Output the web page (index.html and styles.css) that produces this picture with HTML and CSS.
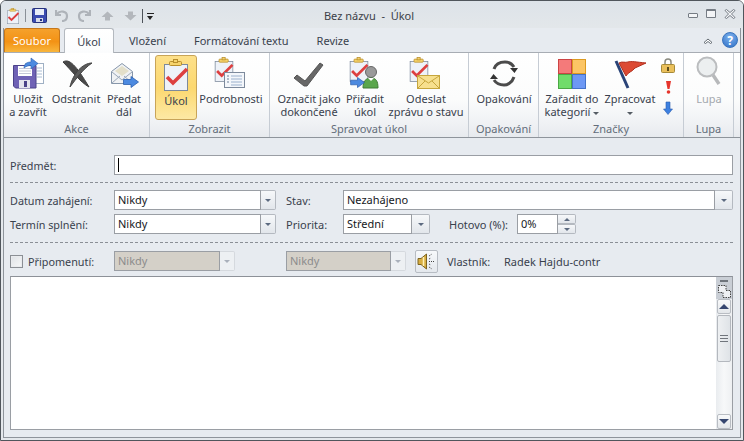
FILE: index.html
```html
<!DOCTYPE html>
<html lang="cs">
<head>
<meta charset="utf-8">
<title>Bez názvu - Úkol</title>
<link rel="stylesheet" href="styles.css">
</head>
<body>
<svg class="defs" width="0" height="0">
  <defs>
    <symbol id="clip" viewBox="0 0 26 32">
      <rect x="1.500" y="5.500" width="23" height="26" fill="#eef2f8" stroke="#7d8a9c"/>
      <rect x="6.500" y="2.500" width="12" height="4" rx="1" fill="#f6d36b" stroke="#b98f2c"/>
      <rect x="10.500" y="0.500" width="4" height="3" fill="#f6d36b" stroke="#b98f2c"/>
      <path d="M4 18l6 6L24 10" fill="none" stroke="#dd4040" stroke-width="3.600"/>
    </symbol>
    <symbol id="arrow" viewBox="0 0 16 12">
      <path d="M0.500 3.500H8V0.500L15.500 6 8 11.500V8.500H0.500z" fill="#4c8ae0" stroke="#2c5fae" stroke-width="0.800"/>
    </symbol>
  </defs>
</svg>
<div class="window">
  <header class="titlebar">
    <div class="qat">
      <svg class="qat-app" width="14" height="16" viewBox="0 0 26 32"><use href="#clip"/></svg>
      <span class="qat-sep"></span>
      <svg width="15" height="15" viewBox="0 0 15 15"><rect x="0.500" y="0.500" width="14" height="14" rx="1" fill="#3b4bb0" stroke="#27327d"/><rect x="3" y="1" width="9" height="6" fill="#e8edf8"/><rect x="4" y="10" width="7" height="4" fill="#d7dbe8"/><rect x="8" y="11" width="2" height="2" fill="#27327d"/></svg>
      <svg class="qat-gap" width="14" height="13" viewBox="0 0 14 13"><path d="M1 1v5h5M2 5c3-4 10-3 10 2 0 3-2 5-5 5" fill="none" stroke="#aeb3b9" stroke-width="2.200"/></svg>
      <svg class="qat-gap" width="14" height="13" viewBox="0 0 14 13"><path d="M13 1v5H8M12 5C9 1 2 2 2 7c0 3 2 5 5 5" fill="none" stroke="#aeb3b9" stroke-width="2.200"/></svg>
      <svg class="qat-gap2" width="13" height="10" viewBox="0 0 13 10"><path d="M6.500 0.500L12.500 6H9v3.500H4V6H0.500z" fill="#b3b7bc"/></svg>
      <svg class="qat-gap2" width="13" height="10" viewBox="0 0 13 10"><path d="M6.500 9.500L12.500 4H9V0.500H4V4H0.500z" fill="#b3b7bc"/></svg>
      <span class="qat-sep qat-sep-b"></span>
      <span class="qat-more"></span>
    </div>
    <div class="title">Bez názvu&nbsp; -&nbsp; Úkol</div>
    <div class="winctl">
      <span class="ctl-min"></span>
      <span class="ctl-max"></span>
      <svg width="12" height="10" viewBox="0 0 12 10"><path d="M1 1.500L2.500 0.500 6 3.500 9.500 0.500 11 1.500 7.500 5 11 8.500 9.500 9.500 6 6.500 2.500 9.500 1 8.500 4.500 5z" fill="#f3f5f7" stroke="#757c84"/></svg>
    </div>
  </header>

  <nav class="tabbar">
    <span class="tab-file">Soubor</span>
    <span class="tab tab-active">Úkol</span>
    <span class="tab">Vložení</span>
    <span class="tab">Formátování textu</span>
    <span class="tab">Revize</span>
    <div class="tab-right">
      <svg width="10" height="7" viewBox="0 0 10 7"><path d="M1 5.500L5 2l4 3.500-1.500 1L5 4.500 2.500 6.500z" fill="#fff" stroke="#555c64" stroke-width="0.900"/></svg>
      <span class="help">?</span>
    </div>
  </nav>

  <section class="ribbon">
    <div class="group g-akce">
      <div class="btns">
        <div class="btn w48">
          <svg width="34" height="34" viewBox="0 0 34 34"><rect x="14.500" y="8.500" width="18" height="20" fill="#fff" stroke="#9fb0c4"/><path d="M26 13h5M26 16h5M26 19h5M26 22h5" stroke="#a9bcd2"/><path d="M2.500 10.500H25V33H4.500L2.500 31z" fill="#6f62b5" stroke="#4b4289"/><rect x="7" y="11" width="14" height="10" fill="#fff"/><path d="M8 13.500h12M8 16h12M8 18.500h12" stroke="#c5c8d8"/><rect x="8" y="25" width="11" height="8" fill="#e4e4ee"/><rect x="13" y="26" width="3" height="6" fill="#4b4289"/><path d="M13 13c0-5 4-6 7-6V3l7 5.500-7 5.500v-3.500c-3 0-5 1-7 2.500z" fill="#4c8ae0" stroke="#2c5fae" stroke-width="0.600"/></svg>
          <span>Uložit<br>a zavřít</span>
        </div>
        <div class="btn w48">
          <svg width="34" height="34" viewBox="0 0 34 34"><path d="M4 7C10 3 17 10 30 32 21 27 12 15 4 7z" fill="#484848" stroke="#3a3a3a"/><path d="M33 8C24 8 14 18 11 32 17 24 24 14 33 8z" fill="#5c5c5c" stroke="#444"/></svg>
          <span>Odstranit</span>
        </div>
        <div class="btn w48">
          <svg width="34" height="34" viewBox="0 0 34 34"><path d="M4.500 16.500L15 8.500l10.500 8v12h-21z" fill="#f0f2f4" stroke="#8696aa"/><path d="M8 16l7-5 7 5-7 5z" fill="#e3dfc9"/><path d="M5 28l8-7M25 28l-8-7M5 17l10 8 10-8" fill="none" stroke="#9aa8ba"/><use href="#arrow" x="16" y="21" width="16" height="12"/></svg>
          <span>Předat<br>dál</span>
        </div>
      </div>
      <div class="group-label">Akce</div>
    </div>

    <div class="group g-zobr">
      <div class="btns">
        <div class="btn w42 selected">
          <svg width="26" height="32" viewBox="0 0 26 32"><use href="#clip"/></svg>
          <span>Úkol</span>
        </div>
        <div class="btn w68">
          <svg width="34" height="34" viewBox="0 0 34 34"><use href="#clip" x="0" y="2" width="20" height="25"/><rect x="10.500" y="17.500" width="20" height="15" fill="#f4f7fb" stroke="#7d8a9c"/><path d="M17 21h11M17 24h11M17 27h11M17 30h11" stroke="#9ab0cc"/><path d="M13 21h2M13 24h2M13 27h2" stroke="#6f8098"/></svg>
          <span>Podrobnosti</span>
        </div>
      </div>
      <div class="group-label">Zobrazit</div>
    </div>

    <div class="group g-sprav">
      <div class="btns">
        <div class="btn w66">
          <svg width="34" height="34" viewBox="0 0 34 34"><path d="M2 23l3-3 8 6L28 8l3 2-16 21h-3z" fill="#676767" stroke="#555"/></svg>
          <span>Označit jako<br>dokončené</span>
        </div>
        <div class="btn w46">
          <svg width="34" height="34" viewBox="0 0 34 34"><use href="#clip" x="1" y="2" width="20" height="25"/><circle cx="23" cy="17" r="5.500" fill="#9a9a9a" stroke="#666"/><path d="M15 33c0-7 3-10 8-10s7 3 7 10z" fill="#5aa64c" stroke="#3f7c35"/><path d="M20 23l3 3 3-3z" fill="#fff"/><use href="#arrow" x="2" y="22" width="15" height="11"/></svg>
          <span>Přiřadit<br>úkol</span>
        </div>
        <div class="btn w76">
          <svg width="34" height="34" viewBox="0 0 34 34"><use href="#clip" x="0" y="2" width="20" height="25"/><rect x="8.500" y="20.500" width="22" height="13" fill="#f7e08e" stroke="#c6a63d"/><path d="M9 21l10.500 7L30 21M9 33l7-7M30 33l-7-7" fill="none" stroke="#c6a63d"/></svg>
          <span>Odeslat<br>zprávu o stavu</span>
        </div>
      </div>
      <div class="group-label">Spravovat úkol</div>
    </div>

    <div class="group g-opak">
      <div class="btns">
        <div class="btn w70">
          <svg width="34" height="34" viewBox="0 0 34 34"><path d="M7 14C9 8 14 7 18 7c4 0 7 2 9 5M27 22c-2 6-7 8-10 8-4 0-8-2-10-5" fill="none" stroke="#4b4b4b" stroke-width="3"/><path d="M23 13h8l-3.500 5zM11 24H3l3.500-5z" fill="#333"/></svg>
          <span>Opakování</span>
        </div>
      </div>
      <div class="group-label">Opakování</div>
    </div>

    <div class="group g-znac">
      <div class="btns">
        <div class="btn w56">
          <svg width="30" height="34" viewBox="0 0 30 34"><rect x="1.500" y="4.500" width="13" height="14" fill="#f47a7a" stroke="#c44"/><rect x="15.500" y="4.500" width="13" height="14" fill="#fcc565" stroke="#dc9a20"/><rect x="1.500" y="19.500" width="13" height="14" fill="#70dc6a" stroke="#4ba845"/><rect x="15.500" y="19.500" width="13" height="14" fill="#6d98f4" stroke="#4472c8"/></svg>
          <span>Zařadit do<br>kategorií<i class="mini-caret"></i></span>
        </div>
        <div class="btn w60">
          <svg width="34" height="34" viewBox="0 0 34 34"><path d="M3 6l12 27" stroke="#2a4478" stroke-width="3"/><path d="M6 8c3-2 6 0 9-1 3-1 8 0 18 1L22 13c-3 4-7 4-9 8z" fill="#dc4a33" stroke="#b2301f"/></svg>
          <span>Zpracovat<br><i class="mini-caret alone"></i></span>
        </div>
        <div class="small-stack">
          <svg width="14" height="15" viewBox="0 0 14 15"><path d="M4 7V4a3 3 0 0 1 6 0v3" fill="none" stroke="#8b8b80" stroke-width="1.500"/><rect x="0.500" y="6.500" width="13" height="8" rx="1" fill="#eac05c" stroke="#a68a3a"/><rect x="6" y="9" width="2" height="4" fill="#5f4d1a"/></svg>
          <svg width="7" height="14" viewBox="0 0 7 14"><path d="M1 1h5L4.500 9h-2z" fill="#e6352c"/><circle cx="3.500" cy="12" r="1.800" fill="#e6352c"/></svg>
          <svg width="10" height="14" viewBox="0 0 10 14"><path d="M3 1h4v7h2.500L5 13.500 0.500 8H3z" fill="#3d80e0" stroke="#2a5cae" stroke-width="0.600"/></svg>
        </div>
      </div>
      <div class="group-label">Značky</div>
    </div>

    <div class="group g-lupa">
      <div class="btns">
        <div class="btn w50 disabled">
          <svg width="34" height="34" viewBox="0 0 34 34"><circle cx="15" cy="12" r="9.500" fill="#eceff0" stroke="#bbbdbf" stroke-width="2"/><path d="M21 20l6 9" stroke="#b7b9bb" stroke-width="3.400"/></svg>
          <span>Lupa</span>
        </div>
      </div>
      <div class="group-label">Lupa</div>
    </div>
  </section>

  <main class="form">
    <div class="row">
      <label class="lab lab-main">Předmět:</label>
      <div class="field grow"><span class="cursor"></span></div>
    </div>
    <hr class="dash">
    <div class="row">
      <label class="lab lab-main">Datum zahájení:</label>
      <div class="combo c-date"><div class="field grow">Nikdy</div><span class="drop"><i></i></span></div>
      <label class="lab lab-second">Stav:</label>
      <div class="combo grow"><div class="field grow">Nezahájeno</div><span class="drop"><i></i></span></div>
    </div>
    <div class="row row-next">
      <label class="lab lab-main">Termín splnění:</label>
      <div class="combo c-date"><div class="field grow">Nikdy</div><span class="drop"><i></i></span></div>
      <label class="lab lab-second">Priorita:</label>
      <div class="combo c-prio"><div class="field grow">Střední</div><span class="drop"><i></i></span></div>
      <label class="lab lab-done">Hotovo (%):</label>
      <div class="combo c-spin">
        <div class="field grow">0%</div>
        <div class="spin"><span class="spin-b"><i class="up"></i></span><span class="spin-b"><i></i></span></div>
      </div>
    </div>
    <hr class="dash dash-b">
    <div class="row">
      <span class="check"></span>
      <label class="lab lab-rem">Připomenutí:</label>
      <div class="combo c-rem"><div class="field grow off">Nikdy</div><span class="drop drop-off"><i></i></span></div>
      <div class="combo c-rem2"><div class="field grow off">Nikdy</div><span class="drop drop-off"><i></i></span></div>
      <span class="sound">
        <svg width="19" height="17" viewBox="0 0 19 17"><path d="M1 5.500h3L9.500 1v15L4 11.500H1z" fill="#d8ae42" stroke="#7d6420"/><path d="M6.500 4v9" stroke="#fff0b8" stroke-width="1.500"/><path d="M12 3l3-2M12 8.500h5M12 14l3 2M12 6l2-1M12 11l2 1" stroke="#444" stroke-dasharray="1 1"/></svg>
      </span>
      <label class="lab lab-owner">Vlastník:</label>
      <span class="lab">Radek Hajdu-contr</span>
    </div>
    <div class="editor">
      <div class="editor-text"></div>
      <div class="scroll">
        <span class="grip"></span>
        <svg class="split" width="13" height="13" viewBox="0 0 13 13"><path d="M0.500 0.500H8V5.500H12.500V12.500H5V7.500H0.500z" fill="#eef0f3" stroke="#444" stroke-dasharray="1.500 1"/></svg>
        <span class="sb-btn"><i class="up"></i></span>
        <span class="thumb"><b></b></span>
        <span class="track"></span>
        <span class="sb-btn"><i></i></span>
      </div>
    </div>
  </main>
</div>
</body>
</html>
```

FILE: styles.css
```css
* { box-sizing: border-box; }
html, body { margin: 0; padding: 0; }
body {
  width: 744px; height: 441px; overflow: hidden;
  font-family: "Noto Sans", "Open Sans", sans-serif;
  font-size: 11px; color: #39414d; background: #fff;
}
.defs { display: block; height: 0; }

.window {
  width: 744px; height: 441px;
  display: flex; flex-direction: column;
  background: #e7ebf0;
  border: 1px solid #50565c;
  border-radius: 6px 6px 0 0;
  padding: 0 2px 2px;
  box-shadow: inset 0 0 0 2px #e4e8ec;
  position: relative;
}
.window::after {
  content: ""; position: absolute; left: 2px; right: 2px; top: 27px; bottom: 2px;
  border: 1px solid #8e949b; border-top: 0; pointer-events: none;
}

.titlebar {
  height: 27px; flex: none;
  display: grid; grid-template-columns: 1fr auto 1fr; align-items: center;
  margin: 0 -2px; padding: 0 6px 0 5px;
  background: linear-gradient(#dde3e9, #e3e7ea);
  border-radius: 5px 5px 0 0;
}
.qat { display: flex; align-items: center; padding-top: 2px; }
.qat-app { margin-left: 0; }
.qat-sep { width: 1px; height: 13px; background: #8a9097; margin: 0 6px 0 5px; }
.qat-sep-b { background: #4d5259; margin: 0 4px 0 5px; height: 14px; }
.qat-gap { margin-left: 8px; }
.qat-gap2 { margin-left: 10px; }
.qat-more { width: 7px; height: 6px; border-top: 1px solid #222; position: relative; }
.qat-more::after {
  content: ""; position: absolute; left: 0; top: 2px;
  border: 3.5px solid transparent; border-top: 4px solid #222; border-bottom: 0;
}
.title { color: #3b4048; font-size: 11px; white-space: nowrap; margin-right: 5px; padding-top: 1px; }
.winctl { display: flex; justify-content: flex-end; align-items: center; gap: 8px; padding-right: 1px; margin-top: -2px; }
.ctl-min { width: 10px; height: 5px; border: 1px solid #757c84; border-radius: 1px; background: #f3f5f7; margin-top: 4px; }
.ctl-max { width: 10px; height: 9px; border: 1px solid #757c84; border-top-width: 2px; border-radius: 1px; background: #f3f5f7; }

.tabbar {
  height: 24px; flex: none; display: flex; align-items: flex-end;
  margin: 0 1px; position: relative; z-index: 1;
}
.tab {
  height: 24px; padding: 0 14px; display: flex; align-items: center;
  font-size: 11px; color: #39414d; white-space: nowrap;
}
.tab-file {
  width: 56px; height: 24px; margin-right: 4px; letter-spacing: 0.1px;
  display: flex; align-items: center; justify-content: center;
  color: #fff; border: 1px solid #c6771a; border-bottom: 0; border-radius: 3px 3px 0 0;
  background: linear-gradient(#f5a12c, #f39215 55%, #f8b63c);
}
.tab-active {
  width: 50px; padding: 0; justify-content: center; height: 25px; margin-bottom: -1px; margin-right: 1px;
  background: linear-gradient(#fff, #fbfcfd);
  border: 1px solid #b4b9bf; border-bottom: 0; border-radius: 3px 3px 0 0;
}
.tab-right { margin-left: auto; height: 24px; display: flex; align-items: center; gap: 9px; padding-right: 2px; }
.help {
  width: 16px; height: 16px; border-radius: 50%;
  background: radial-gradient(circle at 50% 30%, #7db2ee, #2f6fc6);
  border: 1px solid #3a74bd; color: #fff;
  display: flex; align-items: center; justify-content: center;
  font-weight: 700; font-size: 12px;
}

.ribbon {
  height: 86px; flex: none; display: flex;
  margin: 0 1px; padding-right: 6px;
  background: linear-gradient(#fff, #fbfcfc 55%, #eff1f4 85%, #e7eaee);
  border-top: 1px solid #a8adb4; border-bottom: 1px solid #8e949b;
}
.group {
  display: flex; flex-direction: column; flex: none;
  border-right: 1px solid #c6ccd4;
}
.g-akce { width: 146px; }
.g-zobr { width: 120px; padding-left: 5px; }
.g-sprav { width: 199px; padding-left: 6px; }
.g-opak { width: 70px; }
.g-znac { width: 145px; padding-left: 5px; }
.g-lupa { width: 50px; }
.btns { display: flex; height: 67px; flex: none; padding-top: 2px; }
.group-label { text-align: center; color: #636d7a; line-height: 15px; font-size: 11px; margin-top: 1px; white-space: nowrap; }
.g-zobr .group-label { margin-left: -5px; }
.g-sprav .group-label { margin-left: -6px; }
.g-znac .group-label { margin-left: -5px; }
.btn {
  display: flex; flex-direction: column; align-items: center; flex: none;
  text-align: center; line-height: 13px; color: #39414d; white-space: nowrap;
}
.btn svg { flex: none; margin-bottom: 3px; height: 34px; }
.btn span { display: block; }
.w42 { width: 42px; } .w46 { width: 46px; } .w48 { width: 48px; } .w50 { width: 50px; }
.w56 { width: 56px; } .w60 { width: 60px; } .w66 { width: 66px; } .w68 { width: 68px; }
.w70 { width: 70px; } .w76 { width: 76px; }
.selected {
  height: 65px;
  background: linear-gradient(#fde08a, #fcd86f 50%, #fde9a4);
  border: 1px solid #c8a458; border-radius: 3px;
}
.btn.selected svg { margin-top: 3px; margin-bottom: 3px; height: 32px; }
.disabled { color: #a3a8ae; }
.mini-caret {
  display: inline-block; margin-left: 3px; vertical-align: middle;
  border: 3px solid transparent; border-top: 3px solid #555c64; border-bottom: 0;
}
.mini-caret.alone { margin-left: 0; }
.small-stack { width: 16px; display: flex; flex-direction: column; align-items: center; gap: 7px; padding-top: 3px; }

.form { flex: 1; display: flex; flex-direction: column; padding: 17px 7px 8px 6px; min-height: 0; margin: 0 1px; }
.row { display: flex; align-items: center; height: 20px; flex: none; }
.row-next { margin-top: 4px; }
.lab { white-space: nowrap; color: #39414d; flex: none; }
.lab-main { width: 104px; font-size: 10.8px; }
.lab-second { width: 57px; margin-left: 10px; }
.lab-done { width: 68px; margin-left: 19px; }
.lab-rem { width: 86px; margin-left: 5px; font-size: 10.8px; }
.lab-owner { width: 57px; margin-left: 9px; }
.grow { flex: 1; min-width: 0; }
.field {
  height: 20px; padding: 0 0 1px 3px; display: flex; align-items: center;
  background: #fff; border: 1px solid #9a9ea4; color: #15181c;
}
.off { background: #d4d0c8; color: #8c8c8c; }
.cursor { width: 1px; height: 14px; background: #000; }
.dash { border: 0; border-top: 1px dashed #8a8f96; margin: 7px 0; height: 0; width: 100%; flex: none; }
.dash-b { margin: 8px 0; }
.combo { display: flex; flex: none; height: 20px; }
.combo.grow { flex: 1; }
.c-date { width: 162px; }
.c-prio { width: 87px; }
.c-spin { width: 59px; }
.c-rem { width: 121px; }
.c-rem2 { width: 120px; margin-left: 51px; }
.drop {
  width: 15px; flex: none; height: 20px; display: flex; align-items: center; justify-content: center;
  background: linear-gradient(#f6f8fa, #e2e6eb);
  border: 1px solid #b4b9c0; border-left: 0; border-radius: 0 2px 2px 0;
}
.combo.grow .drop, .c-prio .drop { width: 18px; }
.drop i, .spin-b i {
  display: block; border: 3.5px solid transparent; border-top: 3.5px solid #5c6a80; border-bottom: 0;
}
.drop-off { border-color: #d5d9de; background: #edf0f3; }
.drop-off i { border-top-color: #a9b0bb; }
.spin { width: 18px; flex: none; height: 20px; display: flex; flex-direction: column; }
.spin-b {
  height: 10px; display: flex; align-items: center; justify-content: center;
  background: linear-gradient(#f6f8fa, #e2e6eb); border: 1px solid #b4b9c0; border-left: 0; border-radius: 0 2px 2px 0;
}
.spin-b i.up { border-top: 0; border-bottom: 3.5px solid #5c6a80; }
.check { width: 13px; height: 13px; flex: none; border: 1px solid #8b8f95; background: linear-gradient(135deg, #dfe2e6, #f6f7f8); box-shadow: inset 0 0 0 1px #e9ebee; }
.sound {
  width: 23px; height: 23px; flex: none; margin-left: 9px; margin-top: 1px;
  display: flex; align-items: center; justify-content: center;
  background: linear-gradient(#f7f9fb, #e4e8ed); border: 1px solid #b7bcc3; border-radius: 2px;
}

.editor {
  margin-top: 5px; flex: 1; min-height: 0; display: flex;
  background: #fff; border: 1px solid #9a9ea4; border-top-color: #8d9198;
}
.editor-text { flex: 1; }
.scroll {
  width: 16px; flex: none; display: flex; flex-direction: column; align-items: center;
  background: linear-gradient(90deg, #e9ecef, #f7f8f9 50%, #eef0f2);
}
.grip { width: 100%; height: 22px; margin-bottom: -22px; background: #c9ced5; }
.grip::before { content: ""; display: block; width: 8px; height: 2px; margin: 3px auto 0; background: #6f757c; }
.split { position: relative; margin: 8px 0 1px; flex: none; }
.sb-btn {
  width: 14px; height: 15px; flex: none; position: relative;
  display: flex; align-items: center; justify-content: center;
  background: linear-gradient(#f8f9fa, #e4e7ea); border: 1px solid #b9bdc3; border-radius: 2px;
}
.sb-btn i { display: block; border-style: solid; border-color: transparent; border-width: 5px 5px 0; border-top-color: #36466f; }
.sb-btn i.up { border-width: 0 5px 5px; border-top-color: transparent; border-bottom-color: #36466f; }
.thumb {
  width: 14px; height: 47px; flex: none; margin-top: 1px;
  display: flex; align-items: center; justify-content: center;
  background: linear-gradient(90deg, #eef0f2, #dfe3e7); border: 1px solid #b4b8be; border-radius: 2px;
}
.thumb b { width: 8px; height: 7px; border-top: 1px solid #70757c; border-bottom: 1px solid #70757c; position: relative; }
.thumb b::after { content: ""; position: absolute; left: 0; right: 0; top: 2px; height: 1px; background: #70757c; }
.track { flex: 1; }
```
